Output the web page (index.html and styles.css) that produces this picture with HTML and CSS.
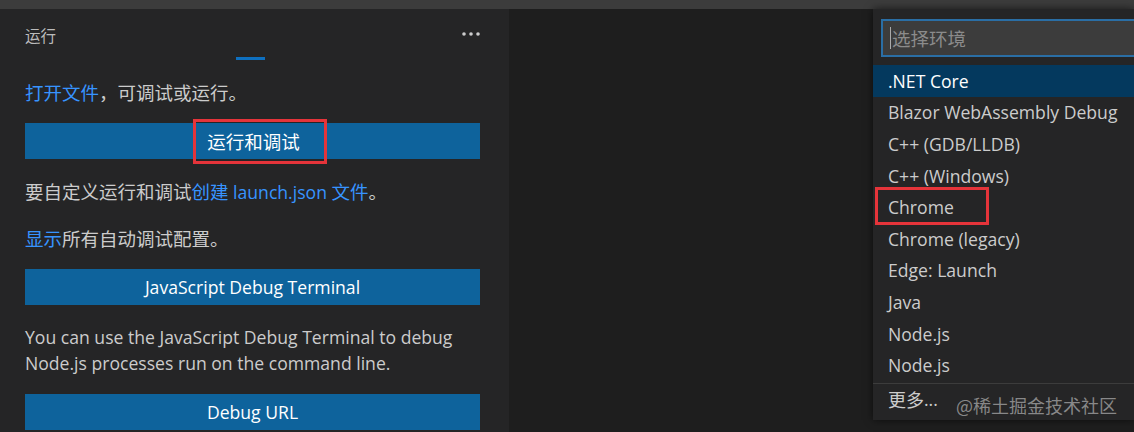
FILE: index.html
```html
<!DOCTYPE html>
<html lang="zh-CN">
<head>
<meta charset="utf-8">
<title>运行</title>
<link rel="stylesheet" href="styles.css">
</head>
<body>
<div class="window">
  <div class="topbar"></div>
  <div class="main">
    <aside class="sidebar">
      <div class="side-header">
        <span class="side-title">运行</span>
        <svg class="more" width="20" height="6" viewBox="0 0 20 6"><circle cx="3" cy="3" r="1.8" fill="#cccccc"/><circle cx="10" cy="3" r="1.8" fill="#cccccc"/><circle cx="17" cy="3" r="1.8" fill="#cccccc"/></svg>
      </div>
      <div class="progress"><div class="progress-bar"></div></div>
      <div class="side-body">
        <p class="para zh"><a class="link">打开文件</a>，可调试或运行。</p>
        <div class="btn"><span class="btn-label boxed zh">运行和调试</span></div>
        <p class="para"><span class="zh">要自定义运行和调试</span><a class="link"><span class="zh">创建</span> launch.json <span class="zh">文件</span></a><span class="zh">。</span></p>
        <p class="para zh"><a class="link">显示</a>所有自动调试配置。</p>
        <div class="btn"><span class="btn-label">JavaScript Debug Terminal</span></div>
        <p class="para para-wrap">You can use the JavaScript Debug Terminal to debug Node.js processes run on the command line.</p>
        <div class="btn btn-last"><span class="btn-label">Debug URL</span></div>
      </div>
    </aside>
    <section class="editor"></section>
  </div>

  <div class="quickpick">
    <div class="qp-input"><span class="caret"></span><span class="placeholder">选择环境</span></div>
    <ul class="qp-list">
      <li class="qp-item selected">.NET Core</li>
      <li class="qp-item">Blazor WebAssembly Debug</li>
      <li class="qp-item">C++ (GDB/LLDB)</li>
      <li class="qp-item">C++ (Windows)</li>
      <li class="qp-item"><span class="boxed-item">Chrome</span></li>
      <li class="qp-item">Chrome (legacy)</li>
      <li class="qp-item">Edge: Launch</li>
      <li class="qp-item">Java</li>
      <li class="qp-item">Node.js</li>
      <li class="qp-item">Node.js</li>
      <li class="qp-item more-item"><span class="zh-more">更多</span>...</li>
    </ul>
  </div>
  <div class="watermark">@稀土掘金技术社区</div>
</div>
</body>
</html>
```

FILE: styles.css
```css
* { box-sizing: border-box; }
html, body { margin: 0; padding: 0; }
body {
  width: 1134px;
  height: 432px;
  overflow: hidden;
  background: #1e1e1e;
  font-family: "Open Sans", "Noto Sans CJK SC", sans-serif;
  color: #cccccc;
}
.window {
  position: relative;
  width: 1134px;
  height: 432px;
  display: flex;
  flex-direction: column;
}
.topbar {
  height: 9px;
  background: #3c3c3c;
  flex: none;
}
.main {
  flex: 1;
  display: flex;
  min-height: 0;
}
.sidebar {
  width: 509px;
  background: #252526;
  flex: none;
  display: flex;
  flex-direction: column;
}
.editor {
  flex: 1;
  background: #1e1e1e;
}
.side-header {
  height: 48px;
  display: flex;
  align-items: center;
  justify-content: space-between;
  padding: 4px 28px 0 25px;
}
.side-title {
  font-size: 15.5px;
  color: #bbbbbb;
  font-family: "Noto Sans CJK SC", sans-serif;
}
.more { display: block; margin-top: -2px; }
.progress {
  height: 3px;
  display: flex;
  padding-left: 236px;
}
.progress-bar {
  width: 29px;
  height: 3px;
  background: #0e70c0;
}
.side-body {
  padding: 19px 29px 0 25px;
  display: flex;
  flex-direction: column;
}
.zh { font-family: "Noto Sans CJK SC", sans-serif; font-size: 18.5px; }
.para {
  margin: 0;
  font-size: 17.6px;
  line-height: 26px;
  color: #cccccc;
}
.para.zh { font-size: 18.5px; }
.para + .btn { margin-top: 18px; }
.btn + .para { margin-top: 19px; }
.para + .para { margin-top: 20px; }
.para-wrap { line-height: 25.5px; margin-top: 20px; }
.btn + .para-wrap { margin-top: 20px; }
.link { color: #3794ff; }
.btn {
  height: 36px;
  background: #0e639c;
  color: #ffffff;
  display: flex;
  align-items: center;
  justify-content: center;
  font-size: 17.6px;
  flex: none;
}
.btn-last { margin-top: 20px; }
.btn-label { line-height: 24px; }
.btn-label.boxed {
  display: flex;
  align-items: center;
  height: 45px;
  padding: 0 24px 0 11px;
  margin-left: 15px;
  border: 3px solid #e5343a;
  flex: none;
}
.quickpick {
  position: absolute;
  left: 873px;
  top: 9px;
  width: 261px;
  height: 411px;
  background: #252526;
  box-shadow: 0 0 8px rgba(0,0,0,0.6);
  padding-top: 10px;
}
.qp-input {
  margin-left: 8px;
  height: 38px;
  background: #3c3c3c;
  border: 2px solid #2a6ea5;
  border-right: none;
  display: flex;
  align-items: center;
  padding-left: 7px;
}
.caret {
  width: 1px;
  height: 22px;
  background: #aaaaaa;
  margin-right: 1px;
}
.placeholder {
  font-size: 18.5px;
  color: #8b8b8b;
  font-family: "Noto Sans CJK SC", sans-serif;
}
.qp-list {
  list-style: none;
  margin: 8px 0 0 0;
  padding: 0;
}
.qp-item {
  height: 31.6px;
  display: flex;
  align-items: center;
  padding-left: 15px;
  font-size: 17.6px;
  color: #cccccc;
  white-space: nowrap;
}
.qp-item.selected { background: #04395e; color: #ffffff; }
.more-item {
  border-top: 1px solid #3c3c3c;
  margin-top: 2px;
  height: 32px;
}
.zh-more { font-family: "Noto Sans CJK SC", sans-serif; font-size: 18px; }
.boxed-item { position: relative; }
.boxed-item::after {
  content: "";
  position: absolute;
  left: -13px;
  right: -35px;
  top: -8px;
  bottom: -6px;
  border: 3px solid #e5343a;
}
.watermark {
  position: absolute;
  left: 956px;
  top: 392px;
  font-size: 18px;
  line-height: 26px;
  color: rgba(170,170,170,0.75);
  font-family: "Noto Sans CJK SC", sans-serif;
}
```
